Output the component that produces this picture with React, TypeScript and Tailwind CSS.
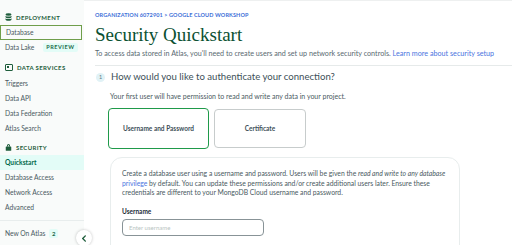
import React from 'react';

const DbIcon = () => (
  <svg width="7" height="8" viewBox="0 0 14 16" fill="#1f5e3c">
    <ellipse cx="7" cy="3" rx="6" ry="2.6" />
    <path d="M1 5.4c1.2 1.2 3.6 1.8 6 1.8s4.8-.6 6-1.8V8c0 1.4-2.7 2.6-6 2.6S1 9.4 1 8z" />
    <path d="M1 10.4c1.2 1.2 3.6 1.8 6 1.8s4.8-.6 6-1.8V13c0 1.4-2.7 2.6-6 2.6S1 14.4 1 13z" />
  </svg>
);

const PanelIcon = () => (
  <svg width="8" height="7" viewBox="0 0 16 14" fill="none" stroke="#1f5e3c" strokeWidth="2">
    <rect x="1" y="1" width="14" height="12" rx="1" />
    <rect x="4" y="4" width="4" height="4" fill="#1f5e3c" stroke="none" />
  </svg>
);

const LockIcon = () => (
  <svg width="7" height="8" viewBox="0 0 14 16" fill="#1f5e3c">
    <path d="M4 7V5a3 3 0 0 1 6 0v2h-2V5a1 1 0 0 0-2 0v2z" />
    <rect x="1.5" y="7" width="11" height="8.5" rx="1" />
  </svg>
);

const navText = 'text-[#4a5a62]';

const SectionHeader = ({ icon, label }: { icon: React.ReactNode; label: string }) => (
  <div className="flex items-center h-[14px] pl-[5px] gap-[4px]">
    {icon}
    <span className="text-[6px] font-bold tracking-[0.06em] text-[#1f5e3c]">{label}</span>
  </div>
);

const NavItem = ({ label, children }: { label: string; children?: React.ReactNode }) => (
  <div className={`flex items-center h-[15px] pl-[5px] text-[6.7px] ${navText}`}>
    <span>{label}</span>
    {children}
  </div>
);

const Sidebar = () => (
  <aside className="relative w-[84px] shrink-0 bg-[#f9fbfa] pt-[10px] flex flex-col">
    <SectionHeader icon={<DbIcon />} label="DEPLOYMENT" />
    <div className="mt-[1px] mr-[2px] h-[15px] flex items-center pl-[5px] text-[6.7px] border border-[#6f9e4a] text-[#4a5a62]">
      Database
    </div>
    <NavItem label="Data Lake">
      <span className="ml-[9px] px-[3px] h-[9px] flex items-center rounded-[2px] bg-[#e3fcf7] text-[#1f6b4c] text-[5.5px] font-bold tracking-[0.1em]">
        PREVIEW
      </span>
    </NavItem>
    <div className="mt-[5px]">
      <SectionHeader icon={<PanelIcon />} label="DATA SERVICES" />
    </div>
    <div className="mt-[2px]">
      <NavItem label="Triggers" />
      <NavItem label="Data API" />
      <NavItem label="Data Federation" />
      <NavItem label="Atlas Search" />
    </div>
    <div className="mt-[4px]">
      <SectionHeader icon={<LockIcon />} label="SECURITY" />
    </div>
    <div className="mt-[1px] h-[15px] flex items-center pl-[5px] text-[6.7px] font-bold bg-[#e3fcf7] text-[#00684a]">
      Quickstart
    </div>
    <NavItem label="Database Access" />
    <NavItem label="Network Access" />
    <NavItem label="Advanced" />
    <div className="mt-[5px] border-t border-[#e8eded]" />
    <div className={`mt-[7px] flex items-center pl-[5px] text-[6.7px] ${navText}`}>
      <span>New On Atlas</span>
      <span className="ml-[4px] w-[9px] h-[9px] flex items-center justify-center rounded-[2px] bg-[#e3fcf7] text-[#1f6b4c] text-[6px] font-bold">
        2
      </span>
    </div>
    <div className="absolute left-[76px] top-[230px] w-[16px] h-[16px] rounded-full bg-white shadow-[0_0_3px_rgba(0,0,0,0.25)] flex items-center justify-center">
      <svg width="6" height="7" viewBox="0 0 6 8" fill="none" stroke="#1f5e3c" strokeWidth="1.6" strokeLinecap="round" strokeLinejoin="round">
        <polyline points="4.5 1 1.5 4 4.5 7" />
      </svg>
    </div>
  </aside>
);

export default function App() {
  return (
    <div className="w-[512px] h-[245px] overflow-hidden flex bg-white font-['Lato',sans-serif]">
      <Sidebar />
      <main className="flex-1 min-w-0 border-t border-[#eef0f0] pl-[11px] pt-[10px]">
        <div className="text-[5.5px] font-bold text-[#3d6fd8] tracking-[0.02em] h-[9px] flex items-center">
          ORGANIZATION 6072901 &gt; GOOGLE CLOUD WORKSHOP
        </div>
        <h1 className="mt-[4px] text-[19px] leading-[22px] text-[#0b5132] font-['Liberation_Serif',serif]">
          Security Quickstart
        </h1>
        <p className="mt-[3px] text-[7.2px] leading-[10px] text-[#5a6a72] whitespace-nowrap">
          To access data stored in Atlas, you'll need to create users and set up network security controls.{' '}
          <span className="text-[#4a74e0]">Learn more about security setup</span>
        </p>
        <div className="mt-[6px] border-t border-[#e6eaea]" />
        <div className="mt-[5px] flex items-center gap-[6px] h-[12px]">
          <span className="ml-[1px] w-[9px] h-[9px] rounded-full bg-[#e1f2f6] text-[#5b7a86] text-[5.5px] flex items-center justify-center">
            1
          </span>
          <span className="text-[9.6px] leading-[12px] text-[#3d4f58]">How would you like to authenticate your connection?</span>
        </div>
        <div className="pl-[15px]">
          <p className="mt-[8px] text-[7px] leading-[10px] text-[#4a5a62]">
            Your first user will have permission to read and write any data in your project.
          </p>
          <div className="mt-[7px] flex gap-[5px] -ml-[2px]">
            <div className="w-[101px] h-[41px] rounded-[4px] border-[1.5px] border-[#1f9a4a] flex items-center justify-center text-[6.5px] font-bold text-[#3d4f58]">
              Username and Password
            </div>
            <div className="w-[92px] h-[39px] mt-[1px] rounded-[4px] border border-[#c7cccc] flex items-center justify-center text-[6.5px] font-bold text-[#3d4f58]">
              Certificate
            </div>
          </div>
          <div className="mt-[8px] w-[350px] rounded-[12px] border border-[#e8eded] pl-[11px] pr-[8px] pt-[11px] pb-[20px]">
            <p className="text-[6.8px] leading-[9.5px] text-[#4a5a62]">
              Create a database user using a username and password. Users will be given the{' '}
              <i>read and write to any database</i>{' '}
              <span className="text-[#4a74e0]">privilege</span> by default. You can update these permissions and/or create additional users later. Ensure these credentials are different to your MongoDB Cloud username and password.
            </p>
            <div className="mt-[9px] text-[6.5px] leading-[9px] font-bold text-[#1c2d38]">Username</div>
            <div className="mt-[3px] w-[142px] h-[17px] rounded-[4px] border border-[#889397] flex items-center pl-[6px] text-[6px] text-[#b8c4c2]">
              Enter username
            </div>
          </div>
        </div>
      </main>
    </div>
  );
}
